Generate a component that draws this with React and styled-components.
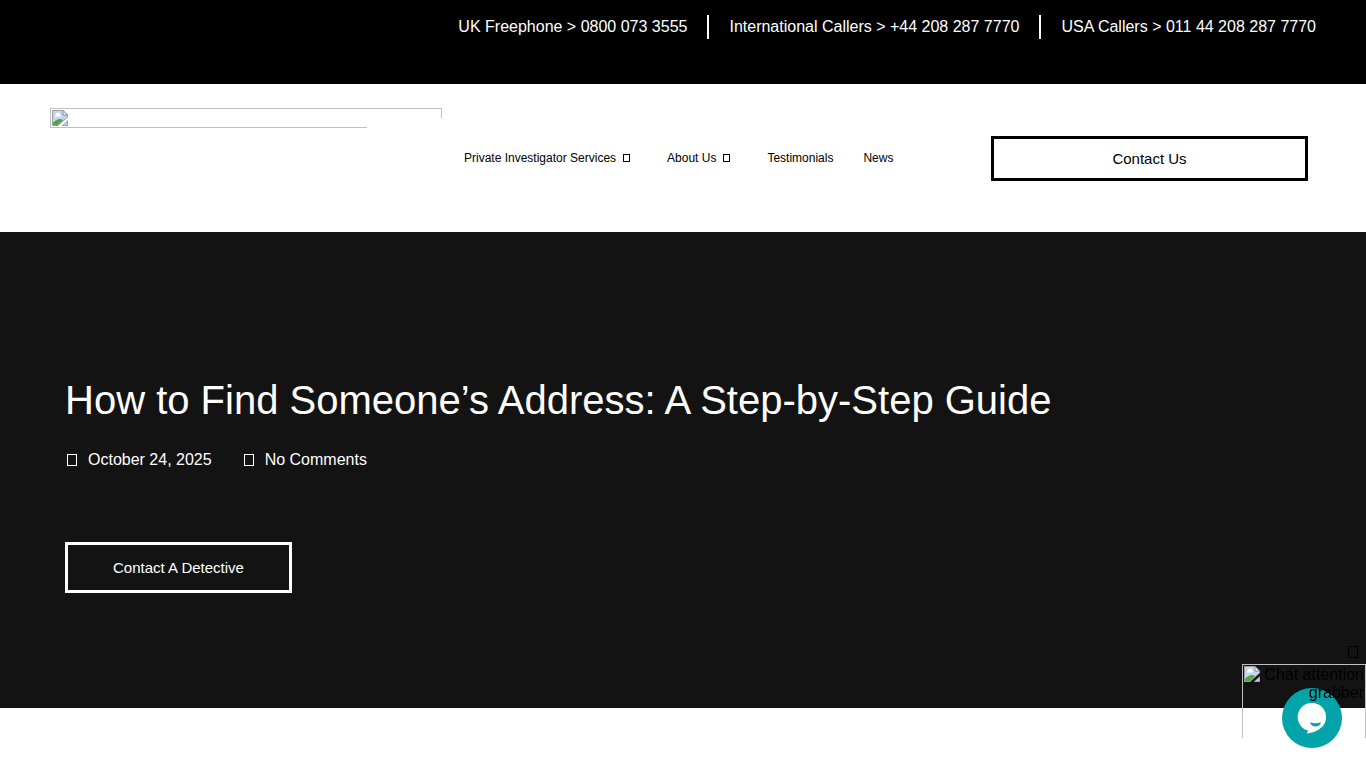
import styled, { createGlobalStyle } from "styled-components";

const GlobalStyle = createGlobalStyle`
  * {
    box-sizing: border-box;
  }

  body {
    margin: 0;
    background-color: #ffffff;
    color: #000000;
    font-family: "Liberation Sans", Arial, sans-serif;
    font-size: 16px;
  }

  a {
    color: inherit;
    text-decoration: none;
  }
`;

const TopBar = styled.div`
  display: flex;
  justify-content: flex-end;
  align-items: flex-start;
  min-height: 84px;
  padding: 15px 50px;
  background-color: #000000;
  color: #ffffff;
`;

const PhoneLink = styled.a`
  line-height: 24px;
  padding-left: 20px;

  & + & {
    border-left: 2px solid #ffffff;
    margin-left: 20px;
  }
`;

const Header = styled.header`
  display: grid;
  grid-template-columns: 392fr 549fr 317fr;
  min-height: 148px;
  padding: 24px 58px 24px 50px;
`;

const Logo = styled.a`
  position: relative;
  display: block;
  height: 20px;
  padding: 1px;
  border: 1px solid #c0c0c0;

  &::after {
    content: "";
    position: absolute;
    right: -1px;
    bottom: -1px;
    width: 75px;
    height: 10px;
    background-color: #ffffff;
  }
`;

const Nav = styled.nav`
  display: flex;
  align-items: center;
  align-self: center;
  gap: 30px;
  padding-left: 22px;
  font-size: 12px;
  line-height: 20px;
  white-space: nowrap;
`;

const NavLink = styled.a`
  display: flex;
  align-items: center;
`;

const Glyph = styled.span`
  flex: none;
  display: inline-block;
  width: ${(props) => (props.$small ? 7 : 10)}px;
  height: ${(props) => (props.$small ? 8 : 12)}px;
  border: 1px solid currentColor;
`;

const NavCaret = styled(Glyph)`
  margin: 0 7px;
`;

const OutlineButton = styled.button`
  border: 3px solid currentColor;
  background-color: transparent;
  color: inherit;
  font-family: inherit;
  font-size: 15px;
  line-height: 15px;
  padding: ${(props) => (props.$wide ? "12px 24px" : "15px 45px")};
  align-self: ${(props) => (props.$wide ? "center" : "flex-start")};
  cursor: pointer;
`;

const Hero = styled.section`
  display: flex;
  flex-direction: column;
  justify-content: center;
  min-height: 476px;
  padding: 28px 65px 0;
  background-color: #131313;
  color: #ffffff;
`;

const Title = styled.h1`
  margin: 0;
  font-size: 40px;
  font-weight: 400;
  line-height: 48px;
`;

const PostMeta = styled.div`
  display: flex;
  gap: 30px;
  margin: 24px 0 70px;
  line-height: 24px;
`;

const MetaItem = styled.a`
  display: flex;
  align-items: center;
  gap: 11px;
  padding-left: 2px;
`;

const ChatWidget = styled.aside`
  position: fixed;
  right: 0;
  bottom: 20px;
  width: 124px;
  height: 102px;
`;

const CloseButton = styled.button`
  position: absolute;
  top: 0;
  right: 8px;
  display: flex;
  padding: 0;
  border: 0;
  background: none;
  color: #000000;
`;

const ChatBubble = styled.button`
  position: absolute;
  right: 24px;
  bottom: 0;
  width: 60px;
  height: 60px;
  padding: 0;
  border: 0;
  border-radius: 50%;
  background-color: #03a4a9;
  cursor: pointer;
`;

const Grabber = styled.div`
  position: absolute;
  top: 18px;
  right: 0;
  width: 100%;
  height: 74px;
  padding: 1px 1px 0 0;
  border: 1px solid #c0c0c0;
  border-bottom: 0;
  line-height: 18px;
  text-align: right;
  pointer-events: none;

  svg {
    vertical-align: top;
  }
`;

const BrokenImage = () => (
  <svg width="16" height="16" viewBox="0 0 16 16" aria-hidden="true">
    <path d="M0 0H11L16 5V7L6 16H0Z" fill="#a0a0a0" />
    <path d="M1 1H11V5H15V7L5 15H1Z" fill="#c3d5f7" />
    <path d="M3 6.500a1.500 1.500 0 0 1 1-2a2 2 0 0 1 4 0a1 1 0 0 1 0 2Z" fill="#ffffff" />
    <path d="M1 15V13C3 10.500 6 9 8 9C9 9 10 9.500 11 10.200L5.500 15Z" fill="#4fa644" />
    <path d="M16 10V16H9.500Z" fill="#a0a0a0" />
    <path d="M15 12V15H11.500Z" fill="#c3d5f7" />
    <path d="M11 0.500V5H15.500Z" fill="#ffffff" stroke="#8a8a8a" />
  </svg>
);

const ChatIcon = () => (
  <svg width="60" height="60" viewBox="0 0 60 60" aria-hidden="true">
    <path
      d="M30 15a14 14 0 0 1 14 14c0 6-3 10-8 13c-3 2-7 3-11 3.500L26 42.500A14 14 0 0 1 30 15Z"
      fill="#ffffff"
    />
    <path
      d="M29 34.500C31 35.500 36 35.500 38 34.500C38.800 34.500 39 35 38.700 35.600C36.500 39.400 30.500 39.400 28.400 35.600C28 35 28.200 34.500 29 34.500Z"
      fill="#03a4a9"
    />
  </svg>
);

const phones = [
  { label: "UK Freephone > 0800 073 3555", href: "tel:08000733555" },
  { label: "International Callers > +44 208 287 7770", href: "tel:+442082877770" },
  { label: "USA Callers > 011 44 208 287 7770", href: "tel:011442082877770" },
];

const links = [
  { label: "Private Investigator Services", menu: true },
  { label: "About Us", menu: true },
  { label: "Testimonials" },
  { label: "News" },
];

export default function App() {
  return (
    <>
      <GlobalStyle />
      <TopBar>
        {phones.map(({ label, href }) => (
          <PhoneLink key={href} href={href}>
            {label}
          </PhoneLink>
        ))}
      </TopBar>
      <Header>
        <Logo href="#home" aria-label="Home">
          <BrokenImage />
        </Logo>
        <Nav>
          {links.map(({ label, menu }) => (
            <NavLink key={label} href="#">
              {label}
              {menu && <NavCaret $small />}
            </NavLink>
          ))}
        </Nav>
        <OutlineButton $wide>Contact Us</OutlineButton>
      </Header>
      <main>
        <Hero>
          <Title>How to Find Someone’s Address: A Step-by-Step Guide</Title>
          <PostMeta>
            <MetaItem href="#date">
              <Glyph />
              October 24, 2025
            </MetaItem>
            <MetaItem href="#comments">
              <Glyph />
              No Comments
            </MetaItem>
          </PostMeta>
          <OutlineButton>Contact A Detective</OutlineButton>
        </Hero>
      </main>
      <ChatWidget>
        <CloseButton aria-label="Close">
          <Glyph />
        </CloseButton>
        <ChatBubble aria-label="Open chat">
          <ChatIcon />
        </ChatBubble>
        <Grabber>
          <BrokenImage /> Chat attention grabber
        </Grabber>
      </ChatWidget>
    </>
  );
}
